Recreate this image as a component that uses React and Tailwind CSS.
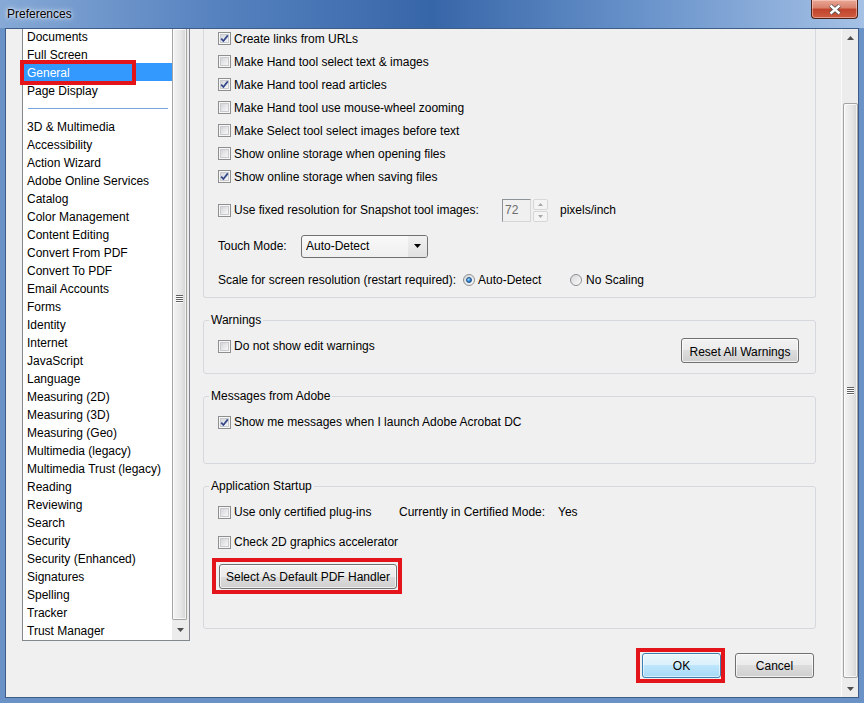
import React from "react";

// left category list
const topItems = ["Documents", "Full Screen", "General", "Page Display"];
const moreItems = [
  "3D & Multimedia",
  "Accessibility",
  "Action Wizard",
  "Adobe Online Services",
  "Catalog",
  "Color Management",
  "Content Editing",
  "Convert From PDF",
  "Convert To PDF",
  "Email Accounts",
  "Forms",
  "Identity",
  "Internet",
  "JavaScript",
  "Language",
  "Measuring (2D)",
  "Measuring (3D)",
  "Measuring (Geo)",
  "Multimedia (legacy)",
  "Multimedia Trust (legacy)",
  "Reading",
  "Reviewing",
  "Search",
  "Security",
  "Security (Enhanced)",
  "Signatures",
  "Spelling",
  "Tracker",
  "Trust Manager",
];

const generalChecks = [
  { label: "Create links from URLs", checked: true },
  { label: "Make Hand tool select text & images", checked: false },
  { label: "Make Hand tool read articles", checked: true },
  { label: "Make Hand tool use mouse-wheel zooming", checked: false },
  { label: "Make Select tool select images before text", checked: false },
  { label: "Show online storage when opening files", checked: false },
  { label: "Show online storage when saving files", checked: true },
];

function CheckBox({ checked }) {
  return (
    <span className="relative flex h-[13px] w-[13px] shrink-0 items-center justify-center border border-[#8e8f8f] bg-[#f6f6f6]">
      <span className="h-[9px] w-[9px] border border-[#c9cbce] bg-[linear-gradient(135deg,#d3d6da,#f7f7f7)]" />
      {checked && (
        <svg className="absolute inset-0" width="11" height="11" viewBox="0 0 11 11">
          <path d="M2.2 5.6 L4.4 8 L8.8 2.4" fill="none" stroke="#33468a" strokeWidth="1.7" />
        </svg>
      )}
    </span>
  );
}

function Radio({ checked }) {
  return (
    <span className="flex h-[12px] w-[12px] shrink-0 items-center justify-center rounded-full border border-[#8e8f8f] bg-[linear-gradient(135deg,#d5d7da,#fbfbfb)]">
      {checked && (
        <span className="h-[6px] w-[6px] rounded-full border border-[#1b4f8a] bg-[radial-gradient(circle_at_35%_35%,#a6e0ff,#2c7fd0_60%,#15508f)]" />
      )}
    </span>
  );
}

function CheckRow({ checked, label, className = "" }) {
  return (
    <div className={`flex items-center gap-[3px] ${className}`}>
      <CheckBox checked={checked} />
      <span className="whitespace-nowrap">{label}</span>
    </div>
  );
}

function WinButton({ children, className = "", primary = false }) {
  return (
    <button
      type="button"
      className={
        primary
          ? `flex h-[25px] items-center justify-center rounded-[3px] border border-[#3c7fb1] bg-[linear-gradient(#eaf6fd_0%,#d9f0fc_50%,#bee6fd_50%,#a7d9f5_100%)] text-[12px] text-black shadow-[inset_0_0_0_1px_rgba(255,255,255,0.6)] ${className}`
          : `flex h-[25px] items-center justify-center rounded-[3px] border border-[#707070] bg-[linear-gradient(#f2f2f2_0%,#ebebeb_50%,#dddddd_50%,#cfcfcf_100%)] text-[12px] text-black shadow-[inset_0_0_0_1px_rgba(255,255,255,0.7)] ${className}`
      }
    >
      {children}
    </button>
  );
}

function Group({ title, className = "", children }) {
  return (
    <fieldset className={`rounded-[3px] border border-[#d5d9de] ${className}`}>
      <legend className="ml-[5px] h-[14px] px-[2px] leading-[14px]">{title}</legend>
      {children}
    </fieldset>
  );
}

function Grip() {
  return (
    <svg width="7" height="8" viewBox="0 0 7 8">
      <path d="M0 0.5H7M0 2.5H7M0 4.5H7M0 6.5H7" stroke="#5f5f5f" strokeWidth="1" />
      <path d="M0 1.5H7M0 3.5H7M0 5.5H7M0 7.5H7" stroke="#ffffff" strokeWidth="1" />
    </svg>
  );
}

function Arrow({ up }) {
  return (
    <svg width="7" height="4" viewBox="0 0 7 4">
      <path d={up ? "M0 4 L3.5 0 L7 4 Z" : "M0 0 L7 0 L3.5 4 Z"} fill="#4d4d4d" />
    </svg>
  );
}

function Thumb({ children, className = "" }) {
  return (
    <div
      className={`flex flex-col items-center rounded-[2px] border border-[#a3a3a3] bg-[linear-gradient(to_right,#f4f4f4,#e6e6e6_60%,#d3d3d3)] shadow-[inset_0_0_0_1px_rgba(255,255,255,0.7)] ${className}`}
    >
      {children}
    </div>
  );
}

export default function App() {
  return (
    <div
      className="flex h-[703px] w-[864px] flex-col bg-[#6a92c6] text-[12px] text-black"
      style={{ fontFamily: '"Liberation Sans", Arial, sans-serif' }}
    >
      {/* title bar */}
      <div className="flex h-[28px] shrink-0 items-start bg-[linear-gradient(to_right,#86a9d6_0%,#5682bf_25%,#3766a8_50%,#6a94cb_75%,#a5c1e5_100%)]">
        <div className="flex h-[26px] flex-1 items-center pl-[7px] pt-[2px] [text-shadow:0_0_6px_#fff,0_0_3px_#fff]">
          Preferences
        </div>
        <button
          type="button"
          className="mr-[6px] flex h-[19px] w-[47px] items-center justify-center rounded-b-[4px] border border-t-0 border-[#4a2219] bg-[linear-gradient(#eaa796_0%,#d8806b_45%,#c1432c_50%,#cd5c40_100%)] shadow-[inset_0_0_0_1px_rgba(255,220,210,0.5)]"
        >
          <svg width="14" height="11" viewBox="0 0 14 11">
            <path d="M2.5 1.5 L11.5 9.5 M11.5 1.5 L2.5 9.5" stroke="#4a4a4a" strokeWidth="4" />
            <path d="M2.5 1.5 L11.5 9.5 M11.5 1.5 L2.5 9.5" stroke="#ffffff" strokeWidth="2.4" />
          </svg>
        </button>
      </div>

      {/* client area */}
      <div className="mx-[5px] flex h-[670px] shrink-0 overflow-hidden border border-[#3d5c86] bg-[#f0f0f0]">
        <div className="flex flex-1 items-start gap-[13px] pl-[16px]">
          {/* category list */}
          <div className="relative flex h-[612px] w-[168px] shrink-0 border-x border-b border-[#828790] bg-white">
            <div className="flex-1 overflow-hidden">
              <div className="mt-[-2px]">
                {topItems.map((item) => (
                  <div
                    key={item}
                    className={
                      item === "General"
                        ? "h-[18px] bg-[#3399ff] pl-[4px] pt-px leading-[18px] text-white"
                        : "h-[18px] pl-[4px] pt-px leading-[18px]"
                    }
                  >
                    {item}
                  </div>
                ))}
                <div className="flex h-[18px] items-center pl-[5px] pr-[4px]">
                  <div className="h-px w-[140px] bg-[#7aa6db]" />
                </div>
                {moreItems.map((item) => (
                  <div key={item} className="h-[18px] whitespace-nowrap pl-[4px] pt-px leading-[18px]">
                    {item}
                  </div>
                ))}
              </div>
            </div>
            <div className="flex w-[17px] flex-col bg-[#ececec]">
              <Thumb className="h-[591px] w-[15px] rounded-t-none border-t-0">
                <div className="mt-[266px]">
                  <Grip />
                </div>
              </Thumb>
              <div className="flex flex-1 items-center justify-center">
                <Arrow />
              </div>
            </div>
            {/* annotation box */}
            <div className="absolute left-[-3px] top-[31px] h-[25px] w-[116px] border-[4px] border-[#e3151a]" />
          </div>

          {/* settings column */}
          <div className="flex w-[613px] shrink-0 flex-col">
            <div className="rounded-b-[3px] border-x border-b border-[#d5d9de] pb-[7px] pl-[14px]">
              <div className="mt-[-2px]">
                {generalChecks.map((c) => (
                  <CheckRow key={c.label} checked={c.checked} label={c.label} className="h-[23px]" />
                ))}
              </div>
              <div className="mt-[10px] flex h-[24px] items-center">
                <CheckRow label="Use fixed resolution for Snapshot tool images:" className="w-[284px]" />
                <div className="flex h-[23px] w-[29px] items-center border border-[#8d9296] border-b-[#d6d6d6] border-r-[#d6d6d6] pl-[2px] text-[#6d6d6d]">
                  72
                </div>
                <div className="ml-[2px] flex h-[23px] w-[15px] flex-col gap-px">
                  <div className="flex flex-1 items-center justify-center rounded-[2px] border border-[#d7d7d7] bg-[#f4f4f4]">
                    <svg width="5" height="3" viewBox="0 0 5 3">
                      <path d="M0 3 L2.5 0 L5 3 Z" fill="#a8a8a8" />
                    </svg>
                  </div>
                  <div className="flex flex-1 items-center justify-center rounded-[2px] border border-[#d7d7d7] bg-[#f4f4f4]">
                    <svg width="5" height="3" viewBox="0 0 5 3">
                      <path d="M0 0 L5 0 L2.5 3 Z" fill="#a8a8a8" />
                    </svg>
                  </div>
                </div>
                <span className="ml-[12px]">pixels/inch</span>
              </div>
              <div className="mt-[12px] flex h-[24px] items-center">
                <span className="w-[83px]">Touch Mode:</span>
                <div className="flex h-[23px] w-[127px] items-center rounded-[3px] border border-[#707070] bg-[linear-gradient(#f9f9f9,#efefef)] pl-[4px]">
                  <span className="flex-1">Auto-Detect</span>
                  <span className="flex h-full w-[19px] items-center justify-center rounded-r-[2px] bg-[linear-gradient(#f0f0f0,#e1e1e1)]">
                    <svg width="7" height="4" viewBox="0 0 7 4">
                      <path d="M0 0 L7 0 L3.5 4 Z" fill="#000" />
                    </svg>
                  </span>
                </div>
              </div>
              <div className="mt-[12px] flex h-[20px] items-center">
                <span className="w-[245px] whitespace-nowrap">Scale for screen resolution (restart required):</span>
                <div className="flex w-[107px] items-center gap-[3px]">
                  <Radio checked />
                  <span>Auto-Detect</span>
                </div>
                <div className="flex items-center gap-[4px]">
                  <Radio />
                  <span>No Scaling</span>
                </div>
              </div>
            </div>

            <Group title="Warnings" className="mt-[15px] pb-[10px]">
              <div className="mt-[11px] flex h-[25px] items-start justify-between pl-[14px] pr-[16px]">
                <CheckRow label="Do not show edit warnings" className="h-[16px]" />
                <WinButton className="w-[118px] pt-[2px]">Reset All Warnings</WinButton>
              </div>
            </Group>

            <Group title="Messages from Adobe" className="mt-[15px] pb-[31px]">
              <CheckRow
                checked
                label="Show me messages when I launch Adobe Acrobat DC"
                className="mt-[9px] h-[20px] pl-[14px]"
              />
            </Group>

            <Group title="Application Startup" className="mt-[15px] pb-[39px]">
              <div className="mt-[9px] flex h-[20px] items-center pl-[14px]">
                <CheckRow label="Use only certified plug-ins" className="w-[181px]" />
                <span className="w-[159px] whitespace-nowrap">Currently in Certified Mode:</span>
                <span>Yes</span>
              </div>
              <CheckRow label="Check 2D graphics accelerator" className="mt-[10px] h-[20px] pl-[14px]" />
              <div className="mt-[12px] pl-[15px]">
                <div className="relative w-[178px]">
                  <WinButton className="w-[178px]">Select As Default PDF Handler</WinButton>
                  <div className="absolute left-[-7px] top-[-6px] h-[36px] w-[190px] border-[4px] border-[#e3151a]" />
                </div>
              </div>
            </Group>

            <div className="mt-[24px] flex justify-end gap-[14px] pr-[2px]">
              <div className="relative">
                <WinButton primary className="w-[79px] pt-px">
                  OK
                </WinButton>
                <div className="absolute left-[-6px] top-[-5px] h-[35px] w-[89px] border-[4px] border-[#e3151a]" />
              </div>
              <WinButton className="w-[79px] pt-px">Cancel</WinButton>
            </div>
          </div>
        </div>

        {/* main scrollbar */}
        <div className="flex w-[17px] shrink-0 flex-col border-l border-[#fafafa] bg-[#ececec]">
          <div className="flex h-[17px] items-center justify-center">
            <Arrow up />
          </div>
          <div className="h-[57px]" />
          <Thumb className="mx-auto h-[575px] w-[15px] justify-center">
            <Grip />
          </Thumb>
          <div className="h-[2px]" />
          <div className="flex h-[17px] items-center justify-center">
            <Arrow />
          </div>
        </div>
      </div>
    </div>
  );
}
